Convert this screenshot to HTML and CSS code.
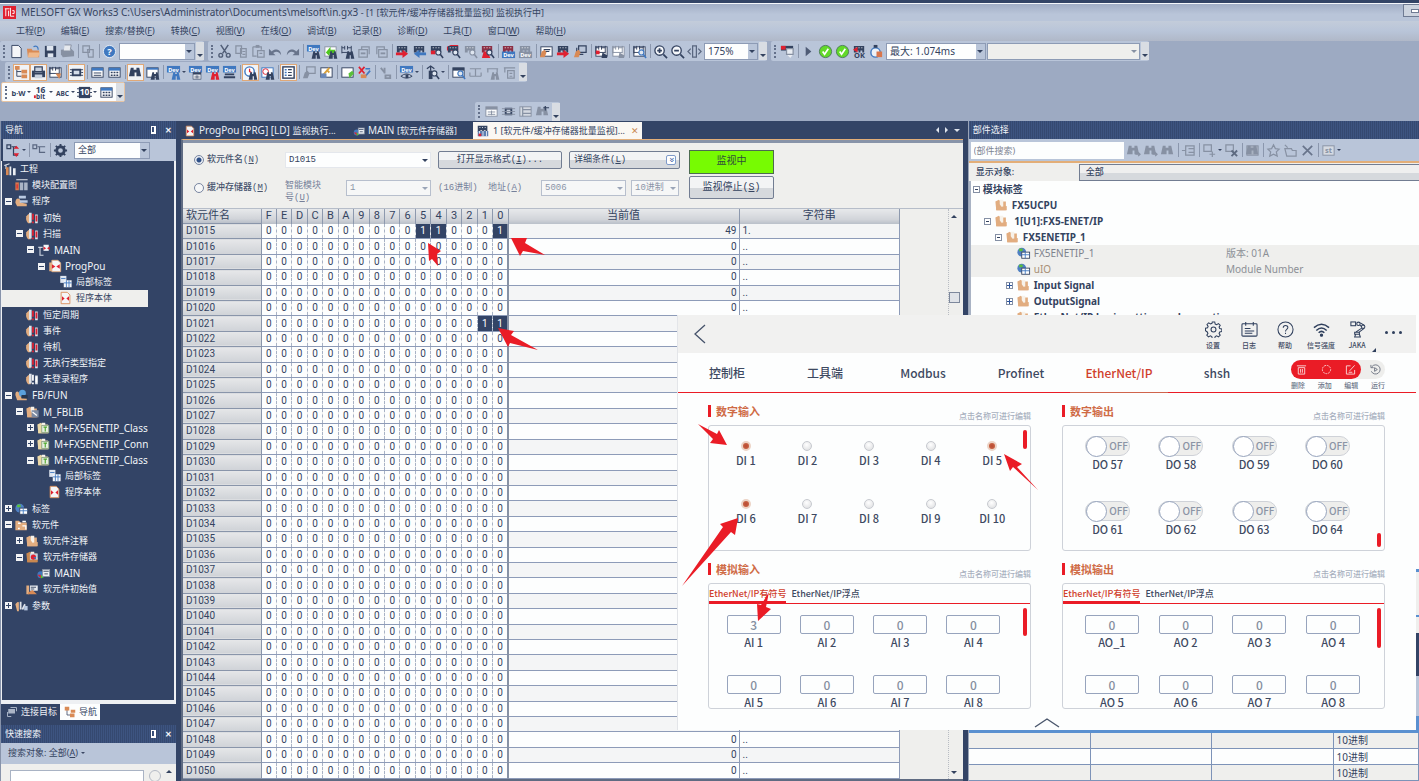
FILE: index.html
```html
<!DOCTYPE html>
<html lang="zh-CN">
<head>
<meta charset="utf-8">
<title>MELSOFT GX Works3</title>
<link rel="stylesheet" href="styles.css">
</head>
<body>
<div class="app">
  <header class="chrome">
    <div class="titlebar">
      <svg class="logo" viewBox="0 0 14 14"><rect width="14" height="14" fill="#e02030"/><path d="M2 3h5M3 3v8M6 5v6M8 2v9h4M10 5h2v3h-2" stroke="#fff" fill="none"/></svg>
      <span>MELSOFT GX Works3 C:\Users\Administrator\Documents\melsoft\in.gx3 <span class="cj">- [1 [软元件/缓冲存储器批量监视] 监视执行中]</span></span>
      <button class="minimize" aria-label="最小化"><i></i></button>
    </div>
    <nav class="menubar">
      <a href="#">工程(<u>P</u>)</a><a href="#">编辑(<u>E</u>)</a><a href="#">搜索/替换(<u>F</u>)</a><a href="#">转换(<u>C</u>)</a><a href="#">视图(<u>V</u>)</a><a href="#">在线(<u>O</u>)</a><a href="#">调试(<u>B</u>)</a><a href="#">记录(<u>R</u>)</a><a href="#">诊断(<u>D</u>)</a><a href="#">工具(<u>T</u>)</a><a href="#">窗口(<u>W</u>)</a><a href="#">帮助(<u>H</u>)</a>
    </nav>
    <div class="toolrow">
      <div class="band">
        <span class="tools" data-tools="new open save print | conv | help"></span>
        <span class="combo w76"><select aria-label="搜索"><option></option></select></span><b class="more"></b>
      </div>
      <div class="band">
        <span class="tools" data-tools="cut copy paste undo redo | dev devg devx sheetl sheetr | write read magr magr2 magg magr3 | devm devmg | hand handr hand2 | lad ladg | ladm | zin zout fit"></span>
        <span class="combo w53"><select aria-label="缩放"><option>175%</option></select></span><b class="more"></b>
      </div>
      <div class="band">
        <span class="tools" data-tools="scr | play ok ok plcok clock"></span>
        <span class="combo w100"><select aria-label="扫描时间"><option>最大: 1.074ms</option></select></span>
        <span class="combo w153 off"><select aria-label="状态" disabled><option></option></select></span><b class="more"></b>
      </div>
    </div>
    <div class="toolrow second">
      <div class="band">
        <span class="tools" data-tools="tree* printd* ladt | chip* | list table | bino* binow | devb^ devt devr devs | clockb* clockl | doc* | handg key | tagg xo | wrench | eye^ | plcm^ | winm wa wb wc"></span><b class="more"></b>
      </div>
    </div>
    <div class="toolrow third">
      <div class="band light">
        <span class="tools" data-tools="bw^ bit^ abc^ ten^ table"></span><b class="more"></b>
      </div>
    </div>
    <div class="toolrow fourth">
      <div class="band"><span class="tools" data-tools="tg chipg lg bg"></span><b class="more"></b></div>
    </div>
  </header>

  <main class="work">
    <aside class="nav">
      <div class="panelhead"><span>导航</span><i class="pin"></i><b>✕</b></div>
      <div class="navtools"><span class="tools" data-tools="t1^ | t2 | gear"></span><span class="combo w76"><select aria-label="显示"><option>全部</option></select></span></div>
      <div class="navbody"><ul class="tree" id="tree"></ul></div>
      <div class="navtabs"><button><i data-icon="link"></i>连接目标</button><button class="on"><i data-icon="navt"></i>导航</button></div>
      <div class="panelhead"><span>快速搜索</span><i class="pin"></i><b>✕</b></div>
      <div class="target">搜索对象: 全部(<u>A</u>)<i class="tri"></i></div>
      <div class="quick"><input aria-label="快速搜索"><i class="ring"></i><i class="up"></i></div>
    </aside>

    <section class="doc">
      <div class="doctabs">
        <button class="dt t1"><i data-icon="body"></i><span>ProgPou [PRG] [LD] <span class="cj">监视执行...</span></span></button>
        <button class="dt t2"><i data-icon="mem"></i><span>MAIN <span class="cj">[软元件存储器]</span></span></button>
        <button class="dt t3 on"><i data-icon="plcmon"></i>1 [软元件/缓冲存储器批量监视]... <em>✕</em></button>
        <span class="arrows"><i class="lt"></i><i class="rt"></i><i class="dn"></i></span>
      </div>
      <div class="docpane">
        <form class="form">
          <div class="lines">
            <div class="line">
              <label class="rad"><input type="radio" name="k" checked><b>软元件名(<u>N</u>)</b></label>
              <span class="combo dev"><select aria-label="软元件名"><option>D1015</option></select></span>
              <button type="button" class="btn fmt">打开显示格式(<u>I</u>)...</button>
              <button type="button" class="btn cond"><span>详细条件(<u>L</u>)</span><i>»</i></button>
            </div>
            <div class="line dim">
              <label class="rad"><input type="radio" name="k"><b>缓冲存储器(<u>M</u>)</b></label>
              <span class="mod">智能模块号(<u>U</u>)</span>
              <span class="combo unit"><select aria-label="智能模块号" disabled><option>1</option></select></span>
              <span class="hex">(16进制)</span><span class="addr">地址(<u>A</u>)</span>
              <span class="combo unit"><select aria-label="地址" disabled><option>5006</option></select></span>
              <span class="combo w48"><select aria-label="进制" disabled><option>10进制</option></select></span>
            </div>
          </div>
          <div class="state"><output>监视中</output><button type="button" class="btn">监视停止(<u>S</u>)</button></div>
        </form>
        <div class="gridwrap">
          <table class="grid" id="grid"></table>
          <div class="vbar"><i class="up"></i><i class="thumb"></i><i class="dn"></i></div>
        </div>
      </div>
    </section>

    <aside class="parts">
      <div class="panelhead"><span>部件选择</span></div>
      <div class="parttools"><input aria-label="部件搜索" placeholder="(部件搜索)"><span class="tools" data-tools="b1 b1 b3 | tl | p1^ p2 | p3 | star p4 cross | p5^"></span></div>
      <div class="show"><label for="show">显示对象:</label><select id="show"><option>全部</option></select></div>
      <ul class="ptree" id="ptree"></ul>
      <div class="watch"><div class="w1"></div><div class="w2"></div><div class="w3"></div><div class="w4"></div><div class="w5"></div></div>
      <table class="formats">
        <tr><td></td><td></td><td></td><td>10进制</td></tr>
        <tr><td></td><td></td><td></td><td>10进制</td></tr>
        <tr><td></td><td></td><td></td><td>10进制</td></tr>
      </table>
    </aside>
  </main>
</div>

<section class="jaka">
  <header class="jhead">
    <button class="back" aria-label="返回"><svg viewBox="0 0 12 20"><path d="M11 1L1 10l10 9" fill="none" stroke="#46536b" stroke-width="1.3"/></svg></button>
    <button><svg viewBox="0 0 18 18"><circle cx="9" cy="9" r="2.6"/><path d="M7.7 1h2.6l.5 2.2 1.5.7 2-1.2 1.800 1.800-1.200 2 .7 1.500 2.200.5v2.600l-2.200.5-.7 1.500 1.200 2-1.800 1.800-2-1.200-1.500.7-.5 2.200H7.700l-.5-2.200-1.500-.7-2 1.200-1.800-1.800 1.200-2-.7-1.500L.5 10.300V7.700l2.200-.5.600-1.500-1.200-2 1.800-1.800 2 1.200 1.500-.7z"/></svg>设置</button>
    <button><svg viewBox="0 0 18 18"><rect x="1" y="3" width="16" height="13" rx="1"/><path d="M5 1v4M13 1v4M4 8h6M4 10.500h10M4 13h8"/></svg>日志</button>
    <button><svg viewBox="0 0 18 18"><circle cx="9" cy="9" r="8"/><path d="M6.600 7.200C6.600 4 11.500 4 11.500 7c0 1.800-2.500 1.800-2.500 4M9 12.500v1.300"/></svg>帮助</button>
    <button><svg viewBox="0 0 18 18"><path d="M1 7q8-7 16 0M3.500 10q5.500-5 11 0M6 12.500q3-3 6 0" stroke-width="1.600"/><circle cx="9" cy="15" r="1.200" fill="#2f3f5c"/></svg>信号强度</button>
    <button><svg viewBox="0 0 18 18"><rect x="2" y="1" width="5" height="4"/><circle cx="10" cy="3" r="1.800"/><circle cx="15" cy="6" r="1.800"/><path d="M12 2l4 2.500M11.500 4.500l2 1.500M13.500 7.500l-6 4M16 7.800l-6 4.500M6 12h5v2H6zM7 14l-1 3h6l-1-3"/></svg>JAKA</button>
    <button class="dots" aria-label="更多"><i></i><i></i><i></i></button>
    <i class="corner"></i>
  </header>
  <nav class="jtabs">
    <div class="jtabset"><a href="#">控制柜</a><a href="#">工具端</a><a href="#">Modbus</a><a href="#">Profinet</a><a href="#" class="on">EtherNet/IP</a><a href="#">shsh</a></div>
    <div class="jacts">
      <div class="pill">
        <span class="red"><svg viewBox="0 0 12 12"><path d="M1 2h10M2.500 4v7h7V4zM5 5.500v4M7 5.500v4"/></svg><svg viewBox="0 0 12 12"><circle cx="6" cy="6" r="4.500" stroke-dasharray="2 1"/></svg><svg viewBox="0 0 12 12"><path d="M6 2H1.500v9h9V6.500M5 7.500l5.500-6M4 9h4"/></svg></span>
        <svg class="run" viewBox="0 0 12 12"><path d="M2 3a5 5 0 1 1-.5 5M1 1v3h3M5 4v4l3-2z"/></svg>
      </div>
      <div class="acts"><span>删除</span><span>添加</span><span>编辑</span><span>运行</span></div>
    </div>
  </nav>
  <div class="jbody" id="jbody"></div>
  <svg class="chev" viewBox="0 0 26 11"><path d="M1 10L13 2l12 8" fill="none" stroke="#4a566c" stroke-width="1.400"/></svg>
</section>

<svg class="marks" viewBox="0 0 1419 781" preserveAspectRatio="none" aria-hidden="true">
  <g fill="#ea1c26">
    <path d="M511 238L527 238 525 243 545 255 523 251 520 256z"/>
    <path d="M428 243L441 251 437 254 438 266 432 259 429 261z"/>
    <path d="M498 328L514 331 511 335 538 350 510 343 508 347z"/>
    <path d="M698 424L717 434 719 430 727 445 710 443 713 439z"/>
    <path d="M1004 454L1022 464 1017 467 1038 490 1013 467 1010 471z"/>
    <path d="M738 518L735 535 731 532 682 586 723 527 720 524z"/>
    <path d="M769 592L766 607 771 609 758 621 757 604 761 605z"/>
  </g>
</svg>
<script src="app.js"></script>
</body>
</html>
```
FILE: styles.css
```css
* { box-sizing: border-box; }
html, body { height: 100%; }
body { margin: 0; position: relative; overflow: hidden; background: #9daac2; color: #34435f; font: 9px/12px "Noto Sans", "Noto Sans CJK SC", sans-serif; }
button, input, select { font: inherit; color: inherit; margin: 0; padding: 0; border: 0; background: none; border-radius: 0; }
select { appearance: none; width: 100%; height: 100%; padding: 0 3px; opacity: 1; }
ul { list-style: none; margin: 0; padding: 0; }
a { color: inherit; text-decoration: none; }
i { font-style: normal; }
svg { display: block; }
.cj { font-size: 9px; }

.app { height: 100%; display: flex; flex-direction: column; }
.chrome { flex: none; border-top: 3px solid #334466; }
.titlebar { height: 18px; display: flex; align-items: center; gap: 5px; padding-left: 3px; border-top: 1px solid #f5f7fb; background: linear-gradient(#a1adc5, #b9c5d9 60%); font-size: 10px; }
.logo { width: 13px; height: 13px; }
.minimize { margin-left: auto; align-self: flex-start; width: 16px; height: 13px; border: 1px solid #6f7b93; border-right: 0; background: #cdd4df; display: flex; align-items: center; justify-content: flex-end; }
.minimize i { width: 8px; height: 4px; border: 1px solid #6f7b93; background: #fff; }
.menubar { height: 20px; display: flex; align-items: center; gap: 16px; padding-left: 16px; background: linear-gradient(#c3ccda, #b9c5d9 50%, #b0b8c8); }
.toolrow { display: flex; height: 20px; gap: 4px; margin-bottom: 1px; }
.toolrow.second { height: 20px; padding-left: 5px; margin: 0; }
.toolrow.third { padding-left: 1px; margin: 0; }
.toolrow.fourth { height: 19px; padding-left: 475px; margin: 0; }
.band { display: flex; align-items: center; background: #b9c5d9; padding-left: 3px; gap: 1px; border-radius: 2px; }
.band.light { background: #fbfcfd; border: 1px solid #e5c3a3; }
.tools { display: flex; align-items: center; }
.band .tools::before { content: ""; height: 13px; border-left: 2px dotted #63708a; margin-right: 3px; }
.tools button { width: 17px; height: 18px; display: flex; align-items: center; justify-content: center; }
.tools button svg { width: 15px; height: 15px; flex: none; }
.tools button.boxed { background: #f1f3f6; border: 1px solid #e0a877; height: 17px; }
.tools button.drop { width: 22px; gap: 1px; }
.tools button.drop::after, .tri { content: ""; border: 2px solid transparent; border-top-color: #3a4763; border-bottom: 0; }
.tools hr { width: 1px; height: 14px; border: 0; margin: 0 1px 0 2px; background: #8b97ad; }
.more { width: 8px; height: 18px; background: #d9dde3; display: flex; align-items: flex-end; justify-content: center; padding-bottom: 3px; }
.more::after { content: ""; border: 3px solid transparent; border-top-color: #33425f; border-bottom: 0; }
.combo { position: relative; display: inline-flex; height: 17px; background: #fdfefe; border: 1px solid #8d9bb5; }
.combo::after { content: ""; position: absolute; right: 2px; top: 6px; border: 3px solid transparent; border-top-color: #33425f; border-bottom: 0; pointer-events: none; }
.chrome .combo, .navtools .combo { background: linear-gradient(90deg, #fdfefe calc(100% - 9px), #b9c5d9 0); }
.chrome .combo { font-size: 10px; }
.chrome .combo.off { background: #efefed; }
.chrome .combo.off::after { border-top-color: #8791a3; }
.w48 { width: 48px; } .w53 { width: 54px; } .w76 { width: 76px; } .w100 { width: 100px; } .w153 { width: 153px; }

.work { flex: 1; min-height: 0; display: flex; background: #334466; }
.panelhead { flex: none; height: 18px; display: flex; align-items: center; gap: 9px; padding: 0 4px; color: #f3f5f9; background: repeating-linear-gradient(90deg, #3d5480 0 1px, #354970 1px 2px); }
.panelhead span { flex: 1; }
.panelhead b { font-size: 8px; }
.pin { width: 5px; height: 8px; border: 1px solid #fff; border-width: 1px 2px 2px 1px; }
.nav { width: 176px; flex: none; display: flex; flex-direction: column; border-left: 1px solid #8793aa; margin-right: 5px; }
.navtools { flex: none; height: 22px; display: flex; align-items: center; background: #b9c5d9; margin-left: 2px; padding-left: 2px; gap: 5px; }
.navbody { flex: 1; min-height: 0; border: solid #eef0f3; border-width: 0 2px 4px 1px; color: #f1f4f8; }
.tree { height: 84%; display: grid; grid-auto-rows: 1fr; margin-right: 26px; }
.tree li, .ptree li { display: flex; align-items: center; white-space: nowrap; overflow: hidden; min-height: 0; }
.tree li { padding-left: calc(var(--lv) * 11px); }
.tree li svg { width: 15px; height: 14px; margin-right: 3px; flex: none; }
.tree li.sel { background: #efefed; color: #34435f; }
.tree li.lat { font-size: 10px; }
.exp { width: 12px; flex: none; display: flex; justify-content: center; }
.exp b { width: 7px; height: 7px; background: linear-gradient(#334466, #334466) center / 5px 1px no-repeat, #f2f3f5; }
.exp b.plus { background: linear-gradient(#334466, #334466) center / 5px 1px no-repeat, linear-gradient(#334466, #334466) center / 1px 5px no-repeat, #f2f3f5; }
.navtabs { flex: none; height: 21px; display: flex; align-items: flex-start; color: #eef1f6; padding-left: 4px; }
.navtabs button { height: 16px; display: flex; align-items: center; gap: 2px; padding: 0 3px 0 0; }
.navtabs svg { width: 14px; height: 12px; }
.navtabs .on { background: #fdfefe; color: #34435f; padding-left: 3px; }
.target { flex: none; height: 21px; background: #b9c5d9; padding: 4px 7px; display: flex; }
.target .tri { margin: 5px 3px; align-self: flex-start; }
.quick { flex: none; height: 17px; background: #efefed; display: flex; align-items: flex-start; padding: 6px 4px 0 9px; gap: 5px; }
.quick input { flex: 1; min-width: 0; background: #fff; border: 1px solid #a9b3c4; height: 16px; }
.ring { width: 12px; height: 12px; border: 1px solid #b4bac5; border-radius: 50%; }
.up, .dn { border: 3px solid transparent; height: 0; width: 0; }
.up { border-bottom-color: #33425f; border-top: 0; }
.dn { border-top-color: #33425f; border-bottom: 0; }

.doc { flex: 787; min-width: 0; display: flex; flex-direction: column; }
.doctabs { flex: none; height: 18px; display: flex; align-items: flex-end; color: #e9edf4; font-size: 10px; white-space: nowrap; }
.dt { height: 17px; display: flex; align-items: center; gap: 3px; padding: 0 3px; }
.dt svg { width: 12px; height: 12px; }
.dt.t1 { width: 169px; }
.dt.t2 { width: 123px; }
.dt.on { background: #faf7f3; color: #34435f; font-size: 9px; }
.dt.on svg { width: 14px; height: 14px; }
.dt em { font-style: normal; color: #c98850; margin-left: 3px; }
.arrows { margin-left: auto; display: flex; gap: 6px; align-self: center; align-items: center; padding-right: 7px; }
.arrows .lt, .arrows .rt { border: 3px solid transparent; border-left-width: 0; border-right-color: #dfe4ec; }
.arrows .rt { border: 3px solid transparent; border-right-width: 0; border-left-color: #dfe4ec; }
.arrows .dn { border-top-color: #dfe4ec; }
.docpane { flex: 1; min-height: 0; display: flex; flex-direction: column; margin-right: 4px; background: #efefed; border: solid #5f6b82; border-width: 1px 0 2px 2px; border-top-color: #e3ae78; box-shadow: inset 0 3px #8894a9; }
.form { flex: none; display: flex; gap: 9px; padding: 10px 0 0 11px; height: 68px; font-family: "Liberation Mono", "Noto Sans CJK SC", monospace; }
.lines { display: flex; flex-direction: column; gap: 8px; }
.line { display: flex; align-items: center; height: 20px; gap: 7px; white-space: nowrap; }
.rad { display: flex; align-items: center; gap: 3px; width: 84px; }
.rad b { font-weight: 500; color: #46536d; }
.rad input { appearance: none; width: 10px; height: 10px; border: 1px solid #7885a0; border-radius: 50%; background: #f6f7f8; }
.rad input:checked { background: radial-gradient(#2d4e86 0 2px, #e9edf3 3px); }
.line .combo { height: 16px; }
.combo.dev { width: 146px; border-color: #e4e7ec; }
.btn { height: 18px; border: 1px solid #727d92; border-radius: 2px; background: linear-gradient(#f3f4f5 50%, #d6d9dd 50%); }
.fmt { width: 124px; }
.cond { width: 111px; display: flex; justify-content: space-between; align-items: center; padding: 0 3px 0 4px; }
.cond i { transform: rotate(90deg); border: 1px solid #7f9ac9; background: #fff; border-radius: 2px; width: 10px; height: 10px; line-height: 8px; color: #2d559b; }
.dim { color: #75809a; }
.dim .combo { color: #8b95a8; border-color: #b7bfcd; background: #f6f7f7; }
.dim .combo::after { border-top-color: #9aa5b8; }
.mod { width: 54px; white-space: normal; padding-right: 14px; line-height: 12px; margin-top: 8px; }
.unit { width: 85px; }
.hex { width: 43px; }
.addr { width: 46px; }
.dim .combo + .combo { margin-left: -2px; }
.state { display: flex; flex-direction: column; gap: 2px; width: 85px; font-size: 10px; }
.state output { height: 24px; border: 1px solid #4c6b50; background: #77fb02; display: flex; align-items: center; justify-content: center; color: #2f4d3a; }
.state .btn { height: 23px; }
.gridwrap { flex: 1; min-height: 0; display: flex; border-top: 1px solid #b6bdc9; }
.grid { width: 717px; height: 100%; table-layout: fixed; border-collapse: collapse; font: 10px/12px Roboto, "Noto Sans CJK SC", sans-serif; }
.grid col.name { width: 78px; }
.grid th, .grid td { padding: 0; text-align: center; overflow: hidden; white-space: nowrap; }
.grid thead th { background: linear-gradient(#e7e9eb, #d1d4d9 70%, #b9bfc9); border-right: 1px solid #8d99ae; font-weight: 400; font-size: 11px; line-height: 14px; }
.grid tbody th { background: linear-gradient(#e6e7e9, #cfd2d7); border: 1px solid #8995aa; border-left: 0; font-weight: 400; }
.grid thead th:first-child, .grid tbody th { text-align: left; padding-left: 3px; }
.grid td { background: #fdfefe; border-bottom: 1px solid #8d9bb8; border-right: 1px dashed #a9b3c6; }
.grid tbody tr:nth-child(odd) .val, .grid tbody tr:nth-child(odd) .str { background: #f4f5f6; }
.grid td.last { border-right: 2px solid #8792a5; }
.grid td.hit { background: #334466; color: #fff; }
.grid .val { text-align: right; padding-right: 2px; border-right: 1px solid #8d9bb8; }
.grid .str { text-align: left; padding-left: 3px; border-right: 1px solid #8d9bb8; }
.vbar { margin-left: auto; width: 12px; border-left: 1px dotted #b8bcc3; display: flex; flex-direction: column; align-items: center; padding: 6px 0 5px; margin-right: 3px; }
.vbar .thumb { width: 11px; height: 11px; margin: 74px 0 auto; border: 1px solid #7d889c; background: #e0e3e8; }

.parts { flex: 451; min-width: 0; display: flex; flex-direction: column; margin-left: 1px; border-left: 1px solid #9aa5b8; }
.parttools { flex: none; height: 22px; background: #b9c5d9; display: flex; align-items: center; gap: 1px; padding-left: 2px; }
.parttools input { width: 153px; height: 17px; background: #fdfefe; padding: 0 3px; }
.parttools input::placeholder { color: #7d8492; }
.show { flex: none; display: flex; height: 20px; align-items: center; background: #efefed; border-top: 2px solid #e3ae78; font-weight: 500; }
.show label { width: 110px; padding-left: 7px; }
.show select { flex: 1; height: 17px; border: 1px solid #727d92; border-right: 0; background: linear-gradient(#efefef 50%, #d6d9dd 50%); padding-left: 6px; }
.ptree { flex: 1; min-height: 0; overflow: hidden; background: #fdfefe; border-left: 2px solid #a9b3c4; font-size: 10px; font-weight: 700; }
.ptree li { height: 16px; padding-left: calc(var(--lv) * 11px); }
.ptree li svg { width: 15px; height: 14px; margin-right: 3px; flex: none; }
.ptree li.info { background: #efefed; color: #7d828c; font-weight: 400; }
.ptree li.info > span:last-child { margin-left: auto; width: 193px; color: #8c8f96; }
.ptree li.tan > span { color: #a89075; }
.ptree .exp b { background: linear-gradient(#34435f, #34435f) center / 3px 1px no-repeat, #fff; border: 1px solid #8590a5; }
.ptree .exp b.plus { background: linear-gradient(#2d559b, #2d559b) center / 5px 1px no-repeat, linear-gradient(#2d559b, #2d559b) center / 1px 5px no-repeat, #fff; }
.watch { flex: none; display: flex; flex-direction: column; }
.w1 { height: 48px; background: #efefed; border-top: 3px solid #5a90d0; border-bottom: 2px solid #5a90d0; }
.w2 { height: 16px; background: #efefed; }
.w3 { height: 43px; background: #334466; }
.w4 { height: 40px; background: #b9c5d9; }
.w5 { height: 17px; background: #5a90d0; }
.formats { flex: none; width: 100%; border-collapse: collapse; table-layout: fixed; font-size: 10px; line-height: 12px; }
.formats td { height: 16px; padding: 0 1px; border: solid #7d93b8; border-width: 0 1px 1px 0; background: #efefed; }
.formats tr:nth-child(2) td { background: #fdfefe; }
.formats td:nth-child(-n+3) { width: 27%; }
.formats td:last-child { padding-left: 3px; }

.jaka { position: absolute; left: 677px; right: 3px; top: 315px; height: 415px; background: #fdfefe; font: 11px/14px "Noto Sans CJK SC", sans-serif; color: #3d4961; font-weight: 500; display: flex; flex-direction: column; border-left: 1px solid #e3e5e9; }
.jhead { height: 38px; flex: none; background: #f1f1f0; display: flex; justify-content: flex-end; align-items: flex-start; padding: 6px 5px 0 0; position: relative; }
.jhead button { width: 36px; display: flex; flex-direction: column; align-items: center; gap: 2px; font-size: 7px; line-height: 10px; white-space: nowrap; }
.jhead button svg { width: 17px; height: 17px; fill: none; stroke: #2f3f5c; stroke-width: 1.1; }
.jhead .back { margin-right: auto; padding-top: 3px; width: 44px; }
.jhead .back svg { width: 12px; height: 20px; }
.jhead .dots { flex-direction: row; justify-content: center; gap: 4px; padding-top: 10px; }
.dots i { width: 3px; height: 3px; border-radius: 50%; background: #2f3f5c; }
.corner { position: absolute; right: 40px; bottom: 1px; border: 2px solid transparent; border-right-color: #2f3f5c; border-bottom-color: #2f3f5c; }
.jtabs { height: 40px; flex: none; border-bottom: 1px solid #ea1c26; display: flex; justify-content: space-between; padding-right: 31px; }
.jtabset { display: grid; grid-template-columns: repeat(6, 98px); font-size: 12px; line-height: 39px; text-align: center; }
.jtabset .on { color: #d0402c; border-bottom: 1px solid #d0644c; }
.pill { width: 94px; height: 19px; margin-top: 7px; border-radius: 10px; background: #eeeeec; display: flex; align-items: center; }
.pill .red { width: 70px; height: 19px; border-radius: 10px; background: #ea1c26; display: flex; align-items: center; justify-content: space-between; padding: 0 5px; }
.pill svg { width: 11px; height: 11px; fill: none; stroke: #fbd9d9; }
.pill svg.run { stroke: #6b7280; margin-left: 9px; }
.acts { display: flex; justify-content: space-between; font-size: 7px; line-height: 12px; color: #6d778a; }
.jbody { flex: none; display: grid; grid-template-columns: 323px 323px; column-gap: 31px; row-gap: 4px; padding: 4px 0 0 30px; }
.sec header { height: 28px; display: flex; align-items: center; gap: 5px; color: #cf6b46; font-weight: 700; }
.sec header::before { content: ""; width: 3px; height: 12px; background: #ea1c26; }
.sec header small { margin-left: auto; font-size: 8px; font-weight: 500; color: #a8b0be; align-self: flex-end; line-height: 19px; }
.box { height: 126px; border: 1px solid #ced2d9; border-radius: 3px; position: relative; overflow: hidden; }
.cells { display: grid; grid-template-columns: repeat(4, 1fr); padding: 10px 20px 0 8px; text-align: center; }
.cells > * { display: flex; flex-direction: column; align-items: center; white-space: nowrap; }
.di { grid-template-columns: repeat(5, 1fr); padding: 15px 7px 0 6px; }
.di > * { height: 58px; gap: 2px; }
.di i { width: 10px; height: 10px; border-radius: 50%; border: 1px solid #c6c9cf; background: radial-gradient(circle at 45% 35%, #fff, #dadbdd); }
.di i.on { border: 2px solid #ecd3c5; background: radial-gradient(#b84a34, #cf6b46); }
.do > * { height: 65px; gap: 1px; }
.do input { appearance: none; width: 45px; height: 20px; border-radius: 10px; background: #eeeeec; border: 1px solid #cfd2d8; display: flex; align-items: center; color: #8b94a5; }
.do input::before { content: ""; width: 19px; height: 19px; border-radius: 50%; background: #fff; border: 1px solid #97a4bd; }
.do input::after { content: "OFF"; margin-left: 2px; font-size: 10px; }
.ai { padding-top: 11px; }
.ai.ao { padding-left: 12px; padding-right: 14px; }
.ai > * { height: 60px; gap: 1px; }
.ai input { width: 54px; height: 19px; border: 1px solid #97a4bd; border-radius: 2px; text-align: center; color: #858f9f; font-size: 12px; }
.sub { display: flex; height: 20px; gap: 5px; border-bottom: 1px solid #ea1c26; font-size: 9px; line-height: 19px; }
.sub a.on { color: #d0402c; border-bottom: 2px solid #ea1c26; }
.bar { position: absolute; right: 3px; width: 4px; border-radius: 2px; background: #ea1c26; }
.bar.b1 { top: 4px; height: 19px; }
.bar.b2 { bottom: 3px; height: 14px; }
.bar.b3 { top: 24px; height: 28px; }
.bar.b4 { top: 24px; height: 40px; }
.chev { width: 26px; height: 11px; margin: 8px auto 0; }
.marks { position: absolute; inset: 0; width: 100%; height: 100%; pointer-events: none; }
```
FILE: app.js
```js
const N = '#33425f', G = '#8791a3', R = '#e02030', B = '#3f78c0';
const ln = (d, c = N, w = 1.3) => `<path d="${d}" fill="none" stroke="${c}" stroke-width="${w}"/>`;
const fl = (d, c = N) => `<path d="${d}" fill="${c}"/>`;
const plc = (c = N) => fl('M2 2h11v7h-2V7H9v2H7V7H5v2H2z', c) + ln('M4 4h1M7 4h1M10 4h1', '#fff', 1);
const mag = (c = N) => `<circle cx="10" cy="9" r="2.700" fill="#dfe6f0" stroke="${c}" stroke-width="1.200"/>` + ln('M12 11l3 4', c, 1.6);
const bin = (c = N, x = 0) => `<g transform="translate(${x})">` + fl('M3 3h3v2h3V3h3l2 9H9V8H7v4H1z', c) + '</g>';
const smallBin = (c = N) => `<g transform="translate(6 7) scale(.62)">${fl('M3 1h3v3h3V1h3l3 13H9V8H7v6H0z', c)}</g>`;
const dev = (c = B) => `<rect x="1" y="1" width="14" height="7" fill="${c}"/><text x="8" y="7" font-size="6" font-weight="700" text-anchor="middle" fill="#fff">Dev</text>`;
const sheet = (c = N, f = '#fff') => `<rect x="2" y="3" width="12" height="10" fill="${f}" stroke="${c}"/>`;
const grid = (c = N) => sheet(c) + fl('M2 3h12v3H2z', c) + ln('M4 8.500h8M4 11h8M8 7v5', c, 1);
const hand = (c = '#d98a55') => fl('M1 14l2-6 3-2 2 3-2 5z', c);
const lad = (c = N) => ln('M2 2v8M2 4h3M5 2v4M8 2v4M8 4h4M2 9h10M12 2v8', c, 1);
const arrow = c => fl('M1 9h7V6l6 4.500L8 15v-3H1z', c);
const page = (c = G) => `<path d="M3 1.500h7l3 3v10H3z" fill="#f5f6f8" stroke="${c}"/>`;
const folder = (c = '#e2ad80') => fl('M1 4l4-2 2 2h6v10H2z', c) + fl('M6 2h4v9H6z', '#f7f2ea') + fl('M2 14V8l4-1 2 3 6-1v5z', c);
const txt = (s, size, c = N, y = 12) => `<text x="8" y="${y}" font-size="${size}" font-weight="700" text-anchor="middle" fill="${c}">${s}</text>`;
const disc = c => `<g>${fl('M1 6c2-3 4-3 5-2v10H3C1 12 0 9 1 6z', '#e2ad80')}${fl('M4 2h3v11H4zM11 4h3v10h-3z', '#dfe3ea')}${ln('M8.500 3v7M8.500 12v2M12.500 5v7', c || R, 2)}</g>`;
const flip = s => `<g transform="matrix(-1 0 0 1 16 0)">${s}</g>`;
const icons = {
  new: page(N), open: fl('M1 5h5l1 2h7v7H2z', '#d98a55') + ln('M8 3c3-2 5 0 5 3', B) + fl('M3 9h12l-2 5H2z', '#efb98c'),
  save: fl('M2 2h12v12H2z') + fl('M4 2h7v5H4z', '#dfe6f0') + fl('M5 10h6v4H5z', '#dfe6f0'),
  print: fl('M1 6l11-1 3 3v5l-12 1-2-3z', G) + fl('M5 1h7l-1 6H4z', '#e6e9ee') + ln('M5 1h7l-1 5M4 11h8', G, 1),
  conv: ln('M2 2h7v7H2zM7 6h6v8H8z', G), help: `<circle cx="8" cy="8" r="6.500" fill="${B}" stroke="#e8eef6"/>` + txt('?', 10, '#fff'),
  cut: ln('M4 1l6 9M12 1L6 10', '#515e77', 1.6) + `<g fill="none" stroke="#515e77" stroke-width="1.500"><circle cx="4" cy="12" r="2"/><circle cx="12" cy="12" r="2"/></g>`,
  copy: ln('M2 2h6v8H2zM7 5h6v9H7zM9 8h3M9 11h3', G), paste: ln('M2 3h9v3M2 3v10h4M7 7h7v7H7zM9 10h3', G) + fl('M5 1h4v3H5z', G),
  undo: fl('M1 5v7h7L5.500 9.500C9 7 12 8 14 12c0-6-6-8-10-4z', '#68748b'), redo: flip(fl('M1 5v7h7L5.500 9.500C9 7 12 8 14 12c0-6-6-8-10-4z', '#68748b')),
  dev: dev() + smallBin(), devg: sheet(G) + fl('M3 9l5-6v3h5v4H7v3z', '#4fc820') + smallBin(), devx: lad() + smallBin(),
  sheetl: ln('M2 6h9v8H2zM5 6V3h8v8', G) + ln('M4 10h5', G, 2), sheetr: flip(ln('M2 6h9v8H2zM5 6V3h8v8', G) + ln('M4 10h5', G, 2)),
  write: plc() + arrow(R), read: plc() + flip(arrow(B)), magr: plc() + fl('M2 7h5v4H2z', R) + mag(), magr2: fl('M1 3l4-2h8v6H1z', R) + plc() + mag(),
  magg: plc(G) + mag(G), magr3: plc('#8c2f45') + fl('M4 8h4l3 7H2z', R) + mag(), devm: plc('#8c2f45') + `<g transform="translate(0 7)">${dev()}</g>`,
  devmg: plc(G) + `<g transform="translate(0 7)">${dev(G)}</g>`, hand: sheet() + ln('M5 6h7M5 8h6') + hand(), handr: plc() + arrow(R),
  hand2: ln('M6 2h8v7H6zM4 4v7h7') + hand(), lad: sheet() + lad() + fl('M2 7h4v4H2z', R) + fl('M9 9l5 3v3H8z'), ladg: sheet(G) + lad(G) + fl('M9 9l5 3v3H8z', G),
  ladm: sheet() + lad() + mag(B), zin: `<circle cx="7" cy="7" r="5" fill="#f5f7fa" stroke="${N}" stroke-width="1.400"/>` + ln('M4.500 7h5M7 4.500v5M11 11l4 4', N, 1.8),
  zout: `<circle cx="7" cy="7" r="5" fill="#f5f7fa" stroke="${N}" stroke-width="1.400"/>` + ln('M4.500 7h5M11 11l4 4', N, 1.8),
  fit: ln('M6 2h4v12H6zM4 5L1 8l3 3M12 5l3 3-3 3', '#59667f'), scr: fl('M1 2h13v5H1z') + fl('M1 2h5v4H1z', R) + fl('M7 5h7v6l-3 4-4-4z', '#e9edf3') + ln('M7 5h7v6H7z', G),
  play: fl('M5 3l6 5-6 5z', '#4e5b75'), ok: `<circle cx="8" cy="8" r="6.500" fill="#62d929" stroke="#4c7a5a"/>` + ln('M5 8l2 3 4-6', '#fff', 1.8),
  plcok: plc() + fl('M1 6l5-3v6z', R) + txt('OK', 8, N, 15), clock: `<circle cx="7" cy="9" r="5" fill="#eef2f7" stroke="${B}" stroke-width="1.500"/>` + fl('M5 1h4v3H5z') + fl('M8 8h6v6H8z', '#d9764c'),
  tree: ln('M3 3v9h5M3 7h5', N, 1) + fl('M1 1h5v4H1zM8 5h6v4H8zM8 10h6v4H8z', '#d98a55'), printd: fl('M1 6h14v7H1z') + fl('M4 2h8v6H4zM4 10h8v4H4z', '#c7d0de') + ln('M4 2h8v5H4z'),
  ladt: sheet() + lad() + fl('M8 9h6l-2 6z', '#d98a55'), chip: fl('M3 4h10v8H3z') + fl('M5 6h6v4H5z', '#d4dce8') + ln('M1 5h14M1 8h2M13 8h2M1 11h14', N, 1),
  list: sheet() + fl('M2 3h12v3H2z', B) + ln('M4 8.500h8M4 11h8', N, 1), table: sheet() + fl('M2 3h12v3H2z', B) + ln('M4 8h2M7 8h2M10 8h2M4 11h2M7 11h2M10 11h2', N, 1.5),
  bino: bin(), binow: sheet() + fl('M2 3h12v2H2z', B) + smallBin(), devb: dev() + smallBin(B), devt: dev() + `<g transform="translate(4 6) scale(.7)">${grid()}</g>`,
  devr: dev() + smallBin(R), devs: dev() + fl('M3 9h10v2H3zM2 12h12v2H2z'), clockb: `<circle cx="7" cy="7" r="5" fill="#fff" stroke="${B}" stroke-width="1.500"/>` + ln('M7 4v3l2 1', R) + smallBin(),
  clockl: sheet(B) + `<circle cx="6" cy="7" r="3" fill="#fff" stroke="${R}"/>` + smallBin(), doc: `<rect x="2" y="2" width="12" height="12" fill="#fff" stroke="${N}" stroke-width="1.500"/>` + ln('M4 5h2M4 8h2M4 11h2', B, 1.500) + ln('M7.500 5h4M7.500 8h4M7.500 11h4'),
  handg: ln('M5 2h9v7H5z', G) + hand(G), key: sheet() + ln('M5 10l6-7M8 5l3 3', '#d9a13c', 2) + fl('M2 9h6v5H2z', '#6b88b8'), tagg: sheet() + fl('M9 9l4-3 2 3-5 5z', '#5abf3a'),
  xo: ln('M2 2l6 7M8 2L2 9', R, 1.8) + ln('M9 4h5M8 13l6-7', B, 1.8) + fl('M4 10h6v4H4z', '#d98a55'), wrench: ln('M3 3l4 5M7 3v6M8 11h5v3H8z', G, 2),
  eye: dev() + ln('M2 12q6-5 12 0-6 4-12 0z', N, 1) + fl('M7 10h3v4H7z'), plcm: ln('M2 4l4-3 4 3M6 2v4') + fl('M4 6h4v9H4z') + mag(), winm: sheet() + fl('M2 3h12v3H2z') + mag(B),
  wa: ln('M2 4h12M8 4v8M2 12h12M2 8v4M14 8v4', G), wb: ln('M2 4h12M3 4v4M13 4v4', G) + smallBin(G), wc: ln('M2 3h12M6 6h7v8H6zM8 9h3M8 12h3M3 3v5', G),
  bw: txt('b·W', 8), bit: txt('16', 9, N, 8) + txt('bit', 7, N, 15) + fl('M1 11h2v3H1z', R), abc: txt('ABC', 7), ten: fl('M2 2h12v12H2z') + ln('M0 4h16M0 8h16M0 12h16', N, 1) + txt('10', 9, '#fff', 11),
  tg: grid(G), chipg: fl('M4 4h8v8H4z') + fl('M6 6h4v4H6z', '#c7d0de') + ln('M1 5h14M1 8h14M1 11h14', G, 1), lg: sheet(G, '#d5dae2') + ln('M5 3v10M5 6h9M5 10h9', G), bg: bin(G) + ln('M11 2v5M9 4h6', N),
  t1: ln('M1 2h4v4H1zM6 4h5M8 4v9h5') + fl('M8 6l3-3 3 3zM8 11l3 4 3-4z', R), t2: ln('M1 2h4v4H1zM6 4h8M8 4v6h6', '#5a6781'), gear: `<circle cx="8" cy="8" r="4" fill="none" stroke="${N}" stroke-width="3"/>` + ln('M8 1v3M8 12v3M1 8h3M12 8h3M3 3l2 2M11 11l2 2M13 3l-2 2M5 11l-2 2', N, 2),
  link: fl('M3 4h9v6H3z', '#aab4c6') + ln('M6 2h8v5M2 8v6h5', '#aab4c6'), navt: ln('M4 4v8h4', N, 1) + fl('M1 1h6v5H1zM9 5h6v4H9zM8 10h6v5H8z', '#d98a55'),
  body: page('#d98a55') + fl('M4 6v5l3-2.500zM12 6v5L9 8.500z', R), mem: `<circle cx="5" cy="10" r="4" fill="${B}"/>` + fl('M1 10h4v4z', R) + fl('M5 10l3 3-3 1z', '#4fc820') + `<rect x="7" y="4" width="8" height="8" fill="#eceff4" stroke="${G}"/>` + ln('M8 6h6M9 9h4', N, 1),
  plcmon: plc() + fl('M2 8h12v6H2z', '#5d7fb0') + ln('M4 8v6M8 8v6M12 8v6', '#e9edf3', 1) + fl('M3 11h3v3H3z', R),
  proj: ln('M2 4l6-2M4 3v5', '#dfe3ea') + fl('M4 6h3v9H4z', '#d98a55') + fl('M8 5h2v10H8zM12 7h3v8h-3z', '#eceff4'), conf: fl('M1 5h4v9H1z', '#d9764c') + fl('M6 5h4v9H6zM11 5h4v9h-4z', '#aab4c6') + ln('M2 2h13', '#fff', 1) + ln('M3 7v5', R),
  prog: fl('M1 10c0-5 3-6 5-4l2 4 6 1v3H3z', '#e2ad80') + fl('M5 2h8v3H5zM6 7h9v3H6z', '#b9c9e2'), disc: disc(), disc2: disc('#fff'), main: ln('M2 5h5M4 5v9h4', '#cfd6e2') + fl('M8 2h6v7H8z', '#f1f4f8') + fl('M8 4v4l3-2zM15 4v4l-3-2z', R),
  pou: fl('M2 4h4v10H2z', '#e2ad80') + `<g transform="translate(2)">${page('#e2ad80')}</g>` + fl('M5 6v5l4-2.500zM14 6v5l-4-2.500z', R), label: fl('M2 1h7v8H2z', '#dfe6f0') + fl('M6 6h9v8H6z', '#f5f7fa') + ln('M6 9h9M9 6v8M12 6v8', B, 1) + ln('M3 4h5', B, 1),
  fb: fl('M1 8c0-4 2-5 4-3l3 6 6 1v2H3z', '#e2ad80') + `<circle cx="9" cy="6" r="4" fill="#5aa0dc"/>` + fl('M8 8h7v4H8z', '#26364f'), lib: folder() + fl('M7 6h8v8H7z', '#7d8ba3') + ln('M8 8l5 4', '#fff'), fbc: folder('#ecd9a8') + `<rect x="6" y="5" width="8" height="8" fill="#e7f0e0" stroke="#8aa080"/>` + ln('M8 7h4M10 7v5', '#4fa82c'),
  globe: `<circle cx="6" cy="7" r="5" fill="#4e7fc2"/>` + fl('M3 3h4v3H3z', '#5abf3a') + `<rect x="6" y="7" width="9" height="7" fill="#fff" stroke="${N}"/>` + ln('M6 10h9M10 7v7', B, 1), devs2: fl('M1 3h4l2 2h7v9H1z', '#e2ad80') + ln('M4 6h3M9 4h4M4 12h2M9 9h4v4', '#fff', 1.5),
  fold: folder(), memo: folder('#c98850') + fl('M5 4h9v7H5z', '#c7d0de') + `<circle cx="9" cy="8" r="3" fill="${R}"/>` + fl('M9 8h3v3z', B), init: fl('M1 4h3v10H1z', '#e2ad80') + fl('M5 4h9v6H5z', '#e7eaf0') + ln('M6 6h6M6 8h4', N, 1) + fl('M3 12l5-3 5 5H3z', '#d98a55'), para: fl('M1 6c2-3 4-3 4-2v10H3z', '#e2ad80') + ln('M7 3v9M12 6l-3 6', '#dfe3ea', 2) + fl('M11 8h4v5h-4z', '#b9c9e2'),
  b1: bin(G) + ln('M10 12h5M13 10l2 2-2 2', G), b3: bin(G), tl: ln('M1 8h4M5 3h9v10H5zM8 6h6M8 10h6', G), p1: ln('M2 2h8v7H2zM8 12h6M11 9v6', G), p2: ln('M2 2h8v7H2z', G) + ln('M8 8l6 6M14 8l-6 6', '#5d6a80', 2), p3: sheet(G, '#aab3c2') + bin(G),
  star: ln('M8 2l2 4 4 .5-3 3 1 4.500-4-2-4 2 1-4.500-3-3L6 6z', G), p4: ln('M2 2l3 3M2 6h7l1 2h4v6H4z', G), cross: ln('M3 3l10 10M13 3L3 13', '#68748b', 1.8), p5: sheet(G, '#d5dae2') + txt('st', 8, G, 11)
};
const svg = n => `<svg viewBox="0 0 16 16">${icons[n]}</svg>`;

document.querySelectorAll('[data-icon]').forEach(e => { e.innerHTML = svg(e.dataset.icon); });
document.querySelectorAll('[data-tools]').forEach(e => {
  e.innerHTML = e.dataset.tools.split(' ').map(t => {
    if (t === '|') return '<hr>';
    const n = t.replace(/[*^]/, '');
    const cls = t.endsWith('*') ? 'boxed' : t.endsWith('^') ? 'drop' : '';
    return `<button class="${cls}" aria-label="${n}">${svg(n)}</button>`;
  }).join('');
});

const expander = s => `<span class="exp">${s ? `<b class="${s === '+' ? 'plus' : ''}"></b>` : ''}</span>`;
const nodes = [
  [0, null, 'proj', '工程'], [0, '', 'conf', '模块配置图'], [0, '-', 'prog', '程序'], [1, '', 'disc', '初始'], [1, '-', 'disc', '扫描'],
  [2, '-', 'main', 'MAIN'], [3, '-', 'pou', 'ProgPou'], [4, '', 'label', '局部标签'], [4, '', 'body', '程序本体', 'sel'],
  [1, '', 'disc', '恒定周期'], [1, '', 'disc', '事件'], [1, '', 'disc', '待机'], [1, '', 'disc', '无执行类型指定'], [1, '', 'disc2', '未登录程序'],
  [0, '-', 'fb', 'FB/FUN'], [1, '-', 'lib', 'M_FBLIB'], [2, '+', 'fbc', 'M+FX5ENETIP_Class1'], [2, '+', 'fbc', 'M+FX5ENETIP_Connect'], [2, '-', 'fbc', 'M+FX5ENETIP_Class1'],
  [3, '', 'label', '局部标签'], [3, '', 'body', '程序本体'], [0, '+', 'globe', '标签'], [0, '-', 'devs2', '软元件'], [1, '+', 'fold', '软元件注释'],
  [1, '-', 'memo', '软元件存储器'], [2, '', 'mem', 'MAIN'], [1, '', 'init', '软元件初始值'], [0, '+', 'para', '参数']
];
document.getElementById('tree').innerHTML = nodes.map(([lv, ex, ic, text, c = '']) =>
  `<li class="${c} ${/^[A-Z]/.test(text) ? 'lat' : ''}" style="--lv:${lv}">${ex === null ? '' : expander(ex)}${svg(ic)}<span>${text}</span></li>`).join('');

const parts = [
  [0, '-', '', '模块标签'], [1, '', 'fold', 'FX5UCPU'], [1, '-', 'fold', '&nbsp;1[U1]:FX5-ENET/IP'], [2, '-', 'fold', 'FX5ENETIP_1'],
  [3, '', 'globe', 'FX5ENETIP_1', 'info', '版本: 01A'], [3, '', 'globe', 'uIO', 'info tan', 'Module Number'],
  [3, '+', 'fold', 'Input Signal'], [3, '+', 'fold', 'OutputSignal'], [3, '', 'fold', 'EtherNet/IP basic setting and operation']
];
document.getElementById('ptree').innerHTML = parts.map(([lv, ex, ic, text, c = '', more]) =>
  `<li class="${c}" style="--lv:${lv}">${expander(ex)}${ic ? svg(ic) : ''}<span>${text}</span>${more ? `<span>${more}</span>` : ''}</li>`).join('');

const bits = [...'FEDCBA9876543210'];
const words = { 1015: 49, 1021: 3 };
let html = `<colgroup><col class="name"><col span="16" style="width:${247 / 16}px"><col style="width:231px"><col></colgroup><thead><tr><th>软元件名</th>${bits.map(b => `<th>${b}</th>`).join('')}<th>当前值</th><th>字符串</th></tr></thead><tbody>`;
for (let a = 1015; a <= 1050; a++) {
  const v = words[a] || 0;
  html += `<tr><th>D${a}</th>`;
  for (let b = 15; b >= 0; b--) {
    const on = v >> b & 1;
    html += `<td class="${on ? 'hit' : ''} ${b ? '' : 'last'}">${on}</td>`;
  }
  html += `<td class="val">${v}</td><td class="str">${a === 1015 ? '1.' : '..'}</td></tr>`;
}
document.getElementById('grid').innerHTML = html + '</tbody>';

const range = (n, f) => Array.from({ length: n }, (_, i) => f(i + 1)).join('');
const sec = (title, inner) => `<section class="sec"><header>${title}<small>点击名称可进行编辑</small></header><div class="box">${inner}</div></section>`;
const sub = '<nav class="sub"><a href="#" class="on">EtherNet/IP有符号</a><a href="#">EtherNet/IP浮点</a></nav>';
const field = (name, v) => `<label><input value="${v}">${name}</label>`;
document.getElementById('jbody').innerHTML =
  sec('数字输入', `<div class="cells di">${range(10, n => `<span><i class="${[1, 5, 6].includes(n) ? 'on' : ''}"></i>DI ${n}</span>`)}</div><i class="bar b1"></i>`) +
  sec('数字输出', `<div class="cells do">${range(8, n => `<label><input type="checkbox">DO ${56 + n}</label>`)}</div><i class="bar b2"></i>`) +
  sec('模拟输入', `${sub}<div class="cells ai">${range(8, n => field(`AI ${n}`, n === 1 ? 3 : 0))}</div><i class="bar b3"></i>`) +
  sec('模拟输出', `${sub}<div class="cells ai ao">${range(8, n => field(n === 1 ? 'AO_1' : `AO ${n}`, 0))}</div><i class="bar b4"></i>`);
```
